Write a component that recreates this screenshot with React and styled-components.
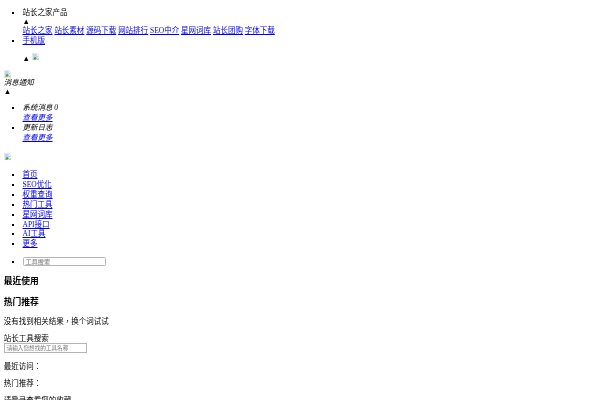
import React from "react";
import styled, { createGlobalStyle } from "styled-components";

const Global = createGlobalStyle`
  html, body { margin: 0; padding: 0; overflow: hidden; background: #fff; }
`;
const Page = styled.div`
  zoom: 0.46875;
  width: 1264px;
  padding: 8px;
  height: 837px;
  overflow: hidden;
  color: #000;
  font: 16px/20.7px "Liberation Serif", "Noto Sans CJK TC", serif;
  filter: blur(0.7px);
`;
const List = styled.ul`
  margin: ${(p) => p.$m || "0"};
  padding: 0 0 0 40px;
  list-style: square;
  line-height: ${(p) => p.$lh || "20.7px"};
`;
const Item = styled.li`
  margin-top: ${(p) => p.$mt || "0"};
`;
const Link = styled.a`
  color: #0000ee;
  text-decoration: underline;
  margin-right: ${(p) => (p.$gap ? "4px" : "0")};
`;
const Arrow = styled.div`
  font-size: 16px;
  height: 18px;
  line-height: 21px;
`;
const Para = styled.p`
  margin: ${(p) => p.$m || "16px 0"};
`;
const Italic = styled.div`
  font-style: italic;
`;
const Heading = styled.h3`
  margin: 16px 0 17px;
  font-size: 18.72px;
  line-height: 27px;
  font-weight: 700;
`;
const SearchA = styled.input`
  display: block;
  width: 178px;
  height: 21px;
  padding: 1px 4px;
  box-sizing: border-box;
  font: 13.3px "Liberation Serif", "Noto Sans CJK TC", serif;
  border: 2px solid #b5b5b5;
  border-radius: 3px;
  background: #fff;
`;
const SearchB = styled(SearchA)`
  width: 178px;
  font-size: 12px;
  border-radius: 0;
`;
const Broken = styled.svg`
  display: ${(p) => (p.$block ? "block" : "inline-block")};
  width: 16px;
  height: 16px;
  vertical-align: baseline;
`;
const Icon = (p) => (
  <Broken viewBox="0 0 16 16" {...p}>
    <path d="M.5 .5h10l5 5v10H.5z" fill="#fff" stroke="#b8b8b8" />
    <path d="M2 2h8v4h4v3L2 12z" fill="#bcd6f2" />
    <path d="M2 14l4.5-6 4 4-3 2.5z" fill="#4f9a3f" />
    <path d="M9 14.500l5-4v4z" fill="#7dbb68" />
  </Broken>
);

const products = ["站长之家", "站长素材", "源码下载", "网站排行", "SEO中介", "星网词库", "站长团购", "字体下载"];
const nav = ["首页", "SEO优化", "权重查询", "热门工具", "星网词库", "API接口", "AI工具", "更多"];

export default function App() {
  return (
    <Page>
      <Global />
      <List $m="8px 0 0">
        <Item>
          站长之家产品
          <Arrow>▲</Arrow>
          <div>
            {products.map((t) => (
              <Link key={t} $gap>{t}</Link>
            ))}
          </div>
        </Item>
        <Item $mt="1px">
          <Link>手机版</Link>
          <Para $m="15px 0 16px">
            <span>▲</span> <Icon />
          </Para>
        </Item>
      </List>
      <Icon $block />
      <Italic>消息通知</Italic>
      <Arrow>▲</Arrow>
      <List $m="16px 0 22px">
        <Item>
          <Italic>系统消息 0</Italic>
          <Italic><Link>查看更多</Link></Italic>
        </Item>
        <Item>
          <Italic>更新日志</Italic>
          <Italic><Link>查看更多</Link></Italic>
        </Item>
      </List>
      <Icon $block />
      <List $m="22px 0 16px" $lh="21px">
        {nav.map((t) => (
          <Item key={t}><Link>{t}</Link></Item>
        ))}
      </List>
      <List $m="16px 0 19px">
        <Item><SearchA placeholder="工具搜索" /></Item>
      </List>
      <Heading>最近使用</Heading>
      <Heading>热门推荐</Heading>
      <Para>没有找到相关结果，换个词试试</Para>
      <div>站长工具搜索</div>
      <SearchB placeholder="请输入您想找的工具名称" />
      <Para $m="18px 0 16px">最近访问：</Para>
      <Para>热门推荐：</Para>
      <Para>请登录查看您的收藏</Para>
    </Page>
  );
}
